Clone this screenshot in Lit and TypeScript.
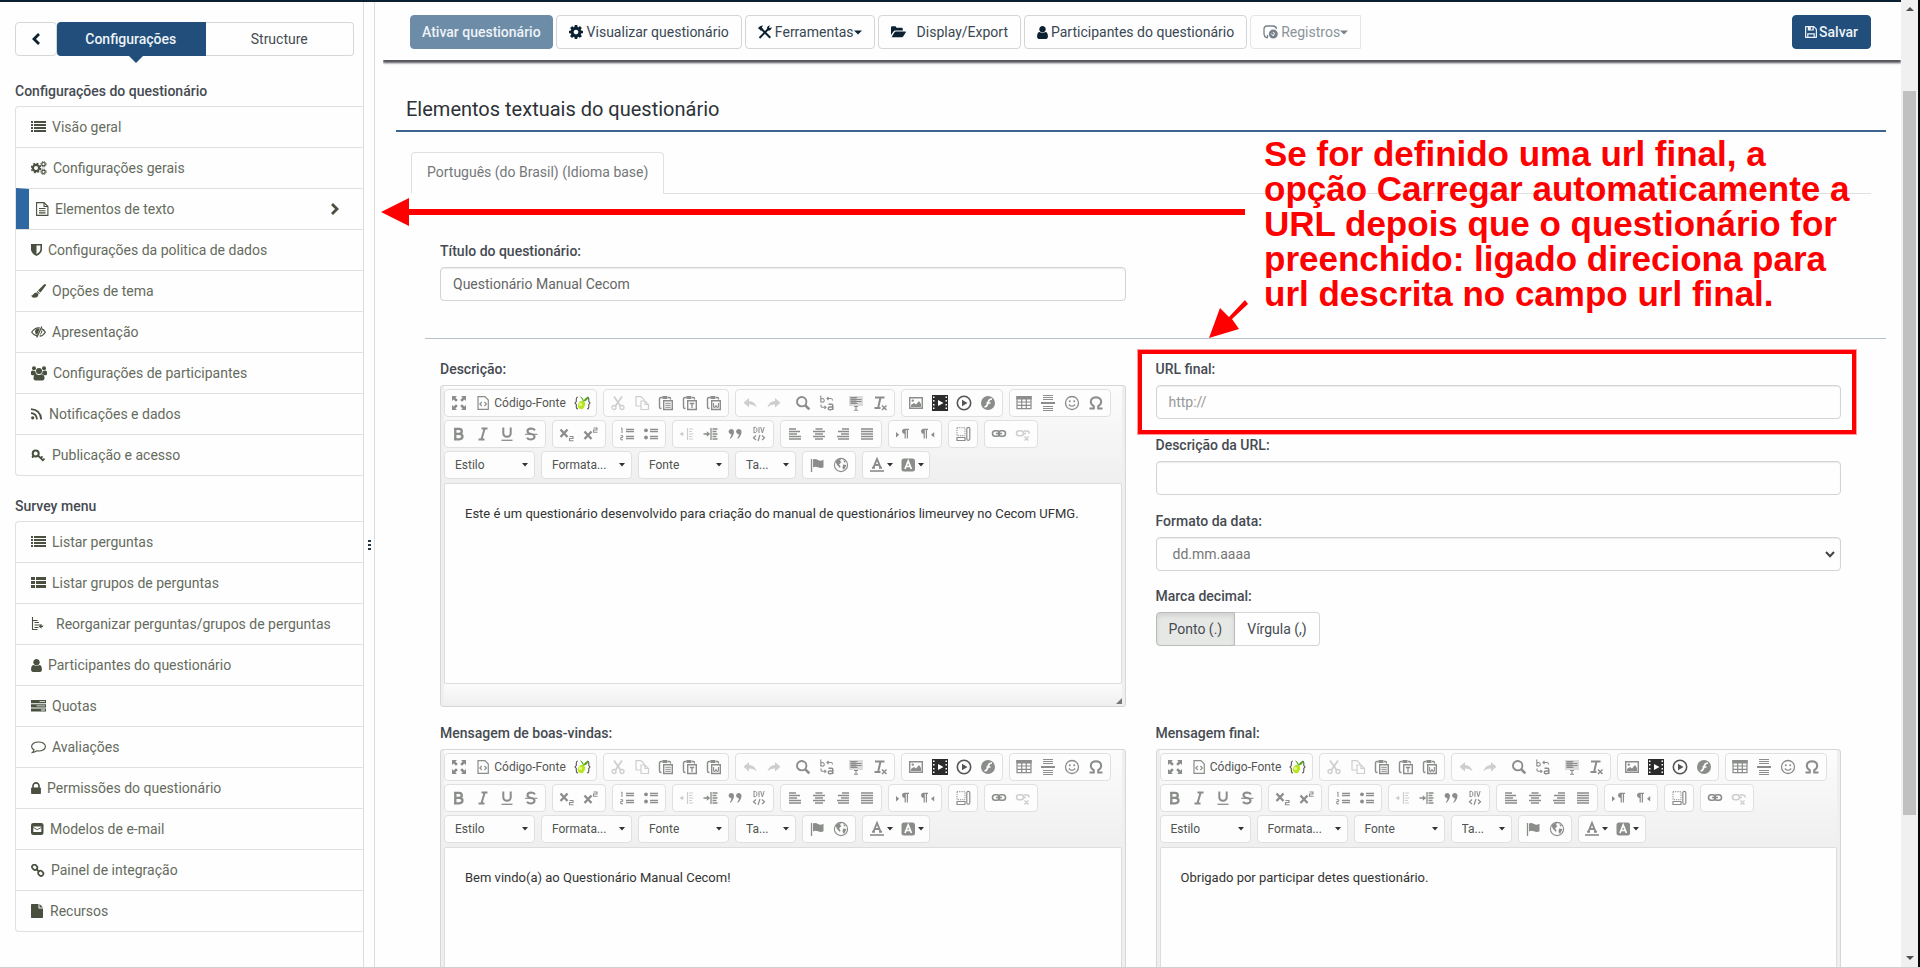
import { LitElement, html, svg, css, nothing, TemplateResult } from "lit";
import { customElement, property } from "lit/decorators.js";
import { classMap } from "lit/directives/class-map.js";

type Icon = { w: number; h: number; box: string; art: TemplateResult };
const ic = (w: number, h: number, art: TemplateResult, box = `0 0 ${w} ${h}`): Icon => ({ w, h, art, box });

const userPath = svg`<path d="M1536 1399q0 109-62.5 187t-150.5 78h-854q-88 0-150.5-78t-62.5-187q0-85 8.5-160.5t31.5-152 58.5-131 94-89 134.5-34.5q131 128 313 128t313-128q76 0 134.5 34.5t94 89 58.5 131 31.5 152 8.5 160.5zm-256-887q0 159-112.5 271.5t-271.5 112.5-271.5-112.5-112.5-271.5 112.5-271.5 271.5-112.5 271.5 112.5 112.5 271.5z"/>`;
const cogPath = svg`<path d="M1152 896q0-106-75-181t-181-75-181 75-75 181 75 181 181 75 181-75 75-181zm512-109v222q0 12-8 23t-20 13l-185 28q-19 54-39 91 35 50 107 138 10 12 10 25t-9 23q-27 37-99 108t-94 71q-12 0-26-9l-138-108q-44 23-91 38-16 136-29 186-7 28-36 28h-222q-14 0-24.5-8.5t-11.5-21.5l-28-184q-49-16-90-37l-141 107q-10 9-25 9-14 0-25-11-126-114-165-168-7-10-7-23 0-12 8-23 15-21 51-66.5t54-70.5q-27-50-41-99l-183-27q-13-2-21-12.5t-8-23.5v-222q0-12 8-23t19-13l186-28q14-46 39-92-40-57-107-138-10-12-10-24 0-10 9-23 26-36 98.5-107.5t94.5-71.5q13 0 26 10l138 107q44-23 91-38 16-136 29-186 7-28 36-28h222q14 0 24.5 8.5t11.5 21.5l28 184q49 16 90 37l142-107q9-9 24-9 13 0 25 10 129 119 165 170 7 8 7 22 0 12-8 23-15 21-51 66.5t-54 70.5q26 50 41 98l183 28q13 2 21 12.5t8 23.5z"/>`;
const clip = svg`<path d="M4.500 2.500H3Q1.500 2.500 1.500 4v8Q1.500 13.500 3 13.500h.5M10 2.500h1.500Q12.500 2.500 12.500 4v.5" fill="none" stroke="currentColor" stroke-width="1.400"/><path d="M4.500 1h5v3h-5z"/><path d="M5.700 5.700h8.600v8.800H5.700z" fill="#fdfefd" stroke="currentColor" stroke-width="1.400"/>`;
const line = (d: string, w = 1.5) => svg`<path d=${d} fill="none" stroke="currentColor" stroke-width=${w}/>`;

const ICONS: Record<string, Icon> = {
  back: ic(8, 12, line("M7 1L2 6l5 5", 2.8)),
  next: ic(8, 12, line("M1 1l5 5-5 5", 2.8)),
  list: ic(15, 12, svg`<path d="M0 0h2v2H0zM3 0h12v2H3zM0 3h2v2H0zM3 3h12v2H3zM0 6h2v2H0zM3 6h12v2H3zM0 9h2v2H0zM3 9h12v2H3z"/>`),
  thlist: ic(15, 12, svg`<path d="M0 0h4v3H0zM5 0h10v3H5zM0 4h4v3H0zM5 4h10v3H5zM0 8h4v3H0zM5 8h10v3H5z"/>`),
  cog: ic(14, 14, cogPath, "128 128 1536 1536"),
  cogs: ic(16, 14, svg`<circle cx="5" cy="7" r="3.100" fill="none" stroke="currentColor" stroke-width="2.200"/><circle cx="5" cy="7" r="4.700" fill="none" stroke="currentColor" stroke-width="1.300" stroke-dasharray="2 1.690"/><circle cx="12.500" cy="3.200" r="1.700" fill="none" stroke="currentColor" stroke-width="1.200"/><circle cx="12.500" cy="3.200" r="2.700" fill="none" stroke="currentColor" stroke-dasharray="1.200 .92"/><circle cx="12.500" cy="10.800" r="1.700" fill="none" stroke="currentColor" stroke-width="1.200"/><circle cx="12.500" cy="10.800" r="2.700" fill="none" stroke="currentColor" stroke-dasharray="1.200 .92"/>`),
  filetext: ic(13, 14, svg`${line("M.6.600h7.400l3.900 3.900v8.900H.6zM8 .6v3.900h3.900", 1.1)}${line("M3 6.500h6.500M3 8.700h6.500M3 10.900h6.500", 1.1)}`),
  shield: ic(11, 12, svg`<path d="M0 0h11v6Q10 10 5.500 12 1 10 0 6zM5.500 1.600v8.700Q9 8.500 9.400 5.800V1.600z" fill-rule="evenodd"/>`),
  brush: ic(15, 14, svg`<path d="M14.600.2q.7.600.1 1.500L9.500 8.600 7 6.500 12.900.6q.9-.8 1.700-.4zM6.400 7.100l2.500 2.200-.6.800-2.600-2.200zM5.200 8.400q2.300.8 2.200 2.600-.6 2.800-4 2.800-2.600 0-3.400-2.600 1.200.6 1.900-.4 1.200-2.300 3.300-2.400z"/>`),
  eyeslash: ic(15, 12, svg`${line("M6.500 10.200Q2.800 9.500.7 6.200 3.500 1.800 7.500 1.800l1.300.1M10.500 2.600q2.500 1.200 3.800 3.600-2.200 3.700-5.600 4", 1.2)}<path d="M4 5.600Q4.300 2.800 7.500 2.600l1.200.2-2.500 6Q4 8 4 5.600z"/>${line("M10.800.6L5.800 11.400", 1.2)}${line("M10.800 4.500q.3 3-2 4", 1)}`),
  users: ic(16, 15, svg`<circle cx="3" cy="2.300" r="2"/><circle cx="13" cy="2.300" r="2"/><circle cx="8" cy="5" r="3"/><path d="M0 8.600V6Q.3 4.500 1.400 4.500L4.200 5q.2 2 1.300 3.100-1 .5-1.300 1.100H1zM16 8.600V6q-.3-1.500-1.400-1.500L11.800 5q-.2 2-1.300 3.100 1 .5 1.300 1.100H15zM2.500 12.500Q2.500 8.500 5 8q3 2 6 0 2.500.5 2.500 4.500-.2 2-2 2h-7q-1.800 0-2-2z"/>`),
  rss: ic(12, 12, svg`<circle cx="1.700" cy="9.800" r="1.600"/>${line("M0 5.200q5.600.4 6 6.200M0 1.200q9.600.6 10.200 10.200", 1.8)}`),
  key: ic(15, 13, svg`<circle cx="4.700" cy="4.500" r="3" fill="none" stroke="currentColor" stroke-width="2"/>${line("M3 6.800L1 8.500M6.800 6.300l5.700 5.600M9.700 9l1.800-1.600M11.800 11.200l1.700-1.600", 1.8)}`),
  reorg: ic(19, 14, svg`${line("M1.500 0v13M1.500 3.500h5M1.500 12.500h5M3.500 5.500h4.500M3.500 8h7M3.500 10.500h4", 1.1)}<path d="M13 4.500v4.200h-2.500v-1.700L7.800 9.400l2.700 2.300V10H12V9l1-1z"/>`),
  user: ic(11, 13, userPath, "256 128 1280 1536"),
  quotas: ic(15, 12, svg`<path d="M0 0h15v3.200H0zM0 4.200h15v3.200H0zM0 8.400h15v3.200H0z"/><path d="M8.500 1.200H14v.9H8.500zM5.500 5.400H14v.9H5.500zM10 9.600h4v.9h-4z" fill="#fdfefd"/>`),
  comment: ic(15, 13, line("M7.500 1C3.500 1 .6 3 .6 5.500q0 2 2.400 3.300-.3 1.700-1.500 2.700 2.300-.2 4-1.700l2 .2c4 0 6.900-2 6.900-4.500S11.500 1 7.500 1z", 1.1)),
  lock: ic(10, 12, svg`<path d="M640 768h512v-192q0-106-75-181t-181-75-181 75-75 181v192zm832 96v576q0 40-28 68t-68 28h-960q-40 0-68-28t-28-68v-576q0-40 28-68t68-28h32v-192q0-184 132-316t316-132 316 132 132 316v192h32q40 0 68 28t28 68z"/>`, "320 128 1152 1408"),
  mail: ic(13, 12, svg`<rect width="12.500" height="12" rx="2.300"/><path d="M2.300 3.500h8v5.500h-8z" fill="#fdfefd"/>${line("M2.300 4.500l4 2.200 4-2.200", .9)}`),
  chain: ic(14, 13, svg`<rect x="1" y="1" width="5.500" height="4.500" rx="2.100" transform="rotate(45 3.700 3.200)" fill="none" stroke="currentColor" stroke-width="1.700"/><rect x="7" y="7" width="5.500" height="4.500" rx="2.100" transform="rotate(45 9.700 9.200)" fill="none" stroke="currentColor" stroke-width="1.700"/>${line("M5 4.600l3.500 3.500", 1.7)}`),
  file: ic(13, 14, svg`<path d="M0 .7Q0 0 .7 0H7.500v4.500H12v8.800q0 .7-.7.700H.7Q0 14 0 13.300zM8.500 0L12 3.500H8.500z"/>`),
  tools: ic(14, 14, svg`${line("M3 3.500l9.300 9.300M11 3.200L1.500 13", 2)}<path d="M0 3.500Q1.500.500 5 .4L3.800 2.500 5 4 3 6 1.800 4.500zM9 2.500Q10 .200 12.300.5L10.800 2l1.200 1.300L13.500 2q.5 2.500-1.800 3.400H9.600z"/>`),
  folder: ic(15, 12, svg`<path d="M0 9V1.300Q.1.300 1.200.2h3q1 .1 1.100 1.200v.4h5.300q1.100.1 1.200 1.200v1.400H4.200q-1 .1-1.700 1zM.6 11.300L3.300 6.500q.5-.9 1.500-1h9.400q1.100.1.500 1.100l-2.400 3.700q-.6 1-1.700 1z"/>`),
  log: ic(15, 14, svg`${line("M5 12.600H3.500Q1 11.500 1 9V4Q1.200 1 4 1h6q3.300.2 3.500 3", 1.3)}${line("M4.500 12.500V10", 1.3)}<circle cx="10.300" cy="9" r="4.500"/><path d="M8 8.500l2.300 2.500 1.200-2.700-1.700-1" stroke="#fdfefd" fill="none"/>`),
  save: ic(12, 12, svg`<path d="M0 .7Q0 0 .7 0H9l3 3v8.300q0 .7-.7.700H.7Q0 12 0 11.300zM1.200 1.200v9.600h1V7.300h7.600v3.500h1V3.500L8.800 1.200v3.300H2.800V1.200zM5.800 1.200v2.200h1.700V1.200zM3.400 8.500v2.300h5.200V8.500z" fill-rule="evenodd"/>`),

  max: ic(16, 16, svg`<path d="M1 1h5L4.400 2.600l2.400 2.400-1.800 1.800L2.600 4.400 1 6zM15 1v5l-1.600-1.600L11 6.800 9.200 5l2.400-2.400L10 1zM1 15v-5l1.600 1.600L5 9.200 6.800 11l-2.400 2.400L6 15zM15 15h-5l1.600-1.600L9.200 11 11 9.200l2.400 2.400L15 10z"/>`),
  source: ic(16, 16, svg`${line("M3 1.700h7l3.300 3.300v9.300H3z", 1.2)}${line("M6.800 7L4.800 9l2 2M9.400 7l2 2-2 2", 1.1)}`),
  lime: ic(17, 16, svg`<path d="M4 2Q2.300 2 2.300 4v2.500L1 8l1.300 1.500V12q0 2 1.700 2M13.500 2q1.300 0 1.300 2v2.500L16 8l-1.200 1.500V12q0 2-1.800 2" fill="none" stroke="#555" stroke-width="1.100"/><ellipse cx="7.500" cy="10" rx="3.400" ry="4.200" transform="rotate(25 7.500 10)" fill="#b6e61e"/><circle cx="6.500" cy="9.500" r="1.700" fill="#e3f77a"/><path d="M9.500 6.500Q9 3 6.500 1.800M10 6q1-3 4-3.800Q13 6 10 6z" fill="#58a618" stroke="#58a618"/>`),
  cut: ic(16, 16, svg`${line("M4 1.500l6.500 9.500M12 1.500L5.500 11", 1.7)}<circle cx="4" cy="12.500" r="2" fill="none" stroke="currentColor" stroke-width="1.300"/><circle cx="12" cy="12.500" r="2" fill="none" stroke="currentColor" stroke-width="1.300"/>`),
  copy: ic(16, 16, svg`${line("M7 11H2V1.600h5l3 3V6", 1.2)}${line("M7 6h4l3.500 3.500v5H7zM11 6v3.500h3.500", 1.2)}`),
  paste: ic(16, 16, svg`${clip}${line("M7.300 8.300h5.500M7.300 10.300h5.500M7.300 12.300h5.500", 1)}`),
  pastet: ic(16, 16, svg`${clip}${line("M7.800 8.500h4.400M10 8.500v4.500", 1.3)}`),
  pastew: ic(16, 16, svg`${clip}${line("M7.600 8v4l1.200.5 1.200-2 1.200 2 1.200-.5V8", 1.1)}`),
  undo: ic(16, 16, svg`<path d="M7 3v3q6 .2 7.500 6.500Q12 9.500 7 9.600V12.500L1.500 7.700z"/>`),
  redo: ic(16, 16, svg`<path d="M9 3v3q-6 .2-7.500 6.500Q4 9.500 9 9.600V12.500l5.500-4.800z"/>`),
  find: ic(16, 16, svg`<circle cx="6.700" cy="6.700" r="4.700" fill="none" stroke="currentColor" stroke-width="1.900"/>${line("M10.300 10.300l4 4", 2.6)}`),
  replace: ic(16, 16, svg`${line("M1.800.5v7M1.800 5Q2 3.500 3.500 3.500T5.200 5.300 3.500 7.100 1.800 5.500M8 3.500h4q1.500 0 1.500 2M9.500 2L8 3.500 9.500 5M2 9.500v1.500q0 1.300 1.500 1.300H7M5.500 10.800L7 12.300l-1.500 1.500", 1.1)}${line("M9.500 9.300h3q1.300 0 1.300 1.500v4.200M13.800 12h-3q-1.500 0-1.500 1.400t1.500 1.400 3-1", 1.5)}`),
  selall: ic(16, 16, svg`<path d="M1 1h14v10H1z" opacity=".3"/>${line("M2.500 2.500h7M2.500 4.500h11M2.500 6.500h11M2.500 8.500h7", 1.2)}<path d="M2.500 2h6v6h-6z" opacity=".6"/>${line("M6 11.500h4M8 11.500v4M6 15.300h4", 1.1)}`),
  removef: ic(16, 16, svg`${line("M3 2.500h9.500M8.500 2.500L6.300 12M2.500 13h6", 2)}${line("M10 10.500l4.500 4.500M14.500 10.500L10 15", 1.5)}`),
  image: ic(16, 16, svg`${line("M1.700 2.700h12.600v10.600H1.700z", 1.400)}<circle cx="4.800" cy="5.600" r="1.200"/><path d="M3 12V10l3-2 2 1.500L11 6l2 3v3z"/>`),
  film: ic(16, 16, svg`<path d="M0 0h16v16H0z" fill="#2b2b2b"/><path d="M1 1.500h1.500V3H1zM1 5h1.500v1.500H1zM1 9h1.500v1.500H1zM1 12.500h1.500V14H1zM13.500 1.500H15V3h-1.500zM13.500 5H15v1.500h-1.500zM13.500 9H15v1.500h-1.500zM13.500 12.500H15V14h-1.500zM6 5l5.500 3L6 11z" fill="#fff"/>`),
  play: ic(16, 16, svg`<circle cx="8" cy="8" r="6.700" fill="none" stroke="#555" stroke-width="1.600"/><path d="M6 4.800L11.500 8 6 11.200z" fill="#555"/>`),
  flash: ic(16, 16, svg`<circle cx="8" cy="8" r="7"/><path d="M12 4Q9 4 8.300 6.800L7.700 9Q7 11.500 4.500 12M6.500 8h4" stroke="#fff" stroke-width="1.700" fill="none"/>`),
  table: ic(16, 16, svg`${line("M1 1.700h14v12H1zM1 7h14M1 10.300h14M5.700 4v10M10.300 4v10", 1.2)}<path d="M.4 1h15.200v3.500H.4z"/>`),
  pagebr: ic(16, 16, svg`${line("M3 .5h10M3 2.500h10M3 4.500h10M3 11.500h10M3 13.500h10M3 15.500h10", 1)}${line("M1 8h14", 2)}`),
  smile: ic(16, 16, svg`<circle cx="8" cy="8" r="6.500" fill="none" stroke="currentColor" stroke-width="1.300"/><circle cx="5.800" cy="6.300" r="1"/><circle cx="10.200" cy="6.300" r="1"/>${line("M4.800 9.500Q8 13 11.200 9.500", 1.200)}`),
  omega: ic(16, 16, line("M1.500 13.500h4.300v-2.300Q2.800 9.500 2.800 6.800 3 2.300 8 2.200q5 .1 5.200 4.600 0 2.700-3 4.400v2.300h4.300", 2)),
  bold: ic(16, 16, line("M4.300 2.800v10.500M3 2.800h5.200q2.600.2 2.600 2.500T8.200 7.900H4.300M8.200 7.900q3.300.2 3.300 2.700t-3.300 2.700H3", 2.3)),
  italic: ic(16, 16, line("M6.500 2.500h6M3.500 13.500h6M9.700 2.500l-3.300 11", 2)),
  under: ic(16, 16, svg`${line("M4.300 1.500V7.500q.2 3.200 3.700 3.200t3.700-3.200V1.500", 2)}${line("M2.500 14.300h11", 1.3)}`),
  strike: ic(16, 16, svg`${line("M12 4.200Q10.500 2.500 8 2.500q-3.500.1-3.500 2.600T8 8t3.500 2.800-3.500 2.700q-3 0-4-1.800", 2.1)}${line("M2 8.300h12.500", 1.1)}`),
  sub: ic(16, 16, svg`${line("M1.500 3.500l7 7.500M8.500 3.500l-7 7.500", 2.300)}${line("M10.500 10.500h3.500v2h-3.500v2.300h4", 1.1)}`),
  sup: ic(16, 16, svg`${line("M1.500 5.500l7 7.500M8.500 5.500l-7 7.500", 2.300)}${line("M10.500 2h3.500v2h-3.500v2.300h4", 1.1)}`),
  ol: ic(16, 16, svg`${line("M2 2.500l1-.5v5M1.500 9.700h2.200v1.800H1.800v2.300H4", 1)}${line("M7 3.500h8M7 5.700h8M7 10.500h8M7 12.700h8", 1.300)}`),
  ul: ic(16, 16, svg`<circle cx="3" cy="4.300" r="1.900"/><circle cx="3" cy="11.500" r="1.900"/>${line("M7 3.500h8M7 5.700h8M7 10.500h8M7 12.700h8", 1.300)}`),
  outdent: ic(16, 16, svg`${line("M1 8h4M8.500 2v12M10 3h4M10 5.500h3M10 8h4.500M10 10.500h3M10 13h4", 1.2)}<path d="M4 5.500L1 8l3 2.500z"/>`),
  indent: ic(16, 16, svg`${line("M.500 8h4M8 2v12M9.500 3h5M9.500 5.500h4M9.500 8h5M9.500 10.500h4M9.500 13h5", 1.3)}<path d="M3.800 5.300L7.200 8 3.800 10.700z"/>`),
  quote: ic(16, 16, svg`<path d="M1.500 5.500Q1.700 3 4.200 3 7 3.200 7 6.200 6.500 11 2.500 13 4.600 10 4.400 8.200 1.700 8 1.500 5.500zM9 5.500Q9.200 3 11.700 3q2.800.2 2.800 3.200Q14 11 10 13q2.100-3 1.900-4.800Q9.200 8 9 5.500z"/>`),
  div: ic(16, 16, svg`${line("M3 1v6M3 1.400h1.500q1.500.5 1.500 2.600T4.500 6.600H3M8 1v6M9.700 1l1.700 6 1.700-6", 1)}${line("M5 9.500L2.500 11.800 5 14M11 9.500l2.500 2.300L11 14M9 9l-2 6", 1.2)}`),
  left: ic(16, 16, line("M2 3h7M2 5.500h11M2 8h8M2 10.500h12M2 13h12", 1.7)),
  center: ic(16, 16, line("M4.500 3h7M2 5.500h12M4 8h8M2 10.500h12M4 13h8", 1.7)),
  right: ic(16, 16, line("M7 3h7M3 5.500h11M6 8h8M2 10.500h12M3 13h11", 1.7)),
  just: ic(16, 16, line("M2 3h12M2 5.500h12M2 8h12M2 10.500h12M2 13h12", 1.7)),
  ltr: ic(16, 16, svg`<path d="M1 6l3.200 2.700L1 11.400zM7 5.500Q7.200 2.800 9.500 2.800H14V4h-1v8.500h-1.200V4h-1v8.500H9.600V8Q7.200 7.800 7 5.500z"/>`),
  rtl: ic(16, 16, svg`<path d="M15.200 6L12 8.700l3.200 2.700zM2 5.500Q2.200 2.800 4.500 2.800H9V4H8v8.500H6.800V4h-1v8.500H4.600V8Q2.200 7.800 2 5.500z"/>`),
  bidi: ic(16, 16, svg`<path d="M2 1.700h8v8H2z" fill="none" stroke="currentColor" stroke-dasharray="1.200 1"/>${line("M2 11.500h8v3H2z", 1.2)}<rect x="11.800" y="1.300" width="3" height="13" rx="1.500" fill="none" stroke="currentColor" stroke-width="1.200"/>`),
  link: ic(16, 16, svg`<rect x="1.500" y="4.800" width="7" height="5.500" rx="2.700" fill="none" stroke="currentColor" stroke-width="1.600"/><rect x="7.500" y="4.800" width="7" height="5.500" rx="2.700" fill="none" stroke="currentColor" stroke-width="1.600"/>${line("M5 7.500h6", 1.5)}`),
  unlink: ic(16, 16, svg`<rect x="1.500" y="4.800" width="7" height="5" rx="2.500" fill="none" stroke="currentColor" stroke-width="1.600"/>${line("M9 5h3q2.200.3 2.200 2.500M8 7.500h3M9.500 10.500l4 4M13.500 10.500l-4 4", 1.500)}`),
  flag: ic(16, 16, svg`${line("M2.500 2v13", 1.300)}<path d="M4 2.500Q6.500 1.500 9 3t5.500-.3v7.500Q12 11.500 9 10.300T4 10.500z"/>`),
  globe: ic(16, 16, svg`<circle cx="8" cy="8" r="6.600" fill="none" stroke="currentColor" stroke-width="1.100"/><path d="M2.500 4.500Q5 1.500 8 2l-1 2 1.500 1-2.500 2.500L7.500 9 7 11 4 8zM10 7.500l3.500.5-2.500 5-1.500-2zM10.500 2.500l2.500 2.500-2 .5z"/>`),
  fcolor: ic(16, 16, svg`${line("M4.500 10.500L8 2l3.500 8.500M5.500 8h5M3 10.800h3M10 10.800h3", 1.900)}${line("M1 14h14", 1.600)}`),
  bcolor: ic(16, 16, svg`<rect x="1.500" y="1.500" width="13.500" height="13" rx="2.500"/><path d="M5 12L8.200 4l3.200 8M6 9.500h4.500" stroke="#fff" stroke-width="1.700" fill="none"/>`),
  caret: ic(6, 4, svg`<path d="M0 0h6L3 3.500z"/>`),
  btncaret: ic(8, 5, svg`<path d="M0 .500h8L4 4.500z"/>`),
  chevdown: ic(10, 7, line("M1 1l4 4.200L9 1", 2)),
};

const icon = (name: string) => {
  const i = ICONS[name];
  return html`<svg class="i" width=${i.w} height=${i.h} viewBox=${i.box} fill="currentColor" aria-hidden="true">${i.art}</svg>`;
};

const iconCss = css`.i { display: block; flex: none; }`;

type Tool = { n: string; label: string; off?: boolean; drop?: boolean };
const t = (n: string, label: string, off = false, drop = false): Tool => ({ n, label, off, drop });

const ROW1: (Tool | "sep")[][] = [
  [t("cut", "Cortar", true), t("copy", "Copiar", true), t("paste", "Colar"), t("pastet", "Colar como texto"), t("pastew", "Colar do Word")],
  [t("undo", "Desfazer", true), t("redo", "Refazer", true), "sep", t("find", "Localizar"), t("replace", "Substituir"), "sep", t("selall", "Selecionar tudo"), t("removef", "Remover formatação")],
  [t("image", "Imagem"), t("film", "Vídeo"), t("play", "Reproduzir"), t("flash", "Flash")],
  [t("table", "Tabela"), t("pagebr", "Quebra de página"), t("smile", "Emoticon"), t("omega", "Caractere especial")],
];
const ROW2: (Tool | "sep")[][] = [
  [t("bold", "Negrito"), t("italic", "Itálico"), t("under", "Sublinhado"), t("strike", "Tachado")],
  [t("sub", "Subscrito"), t("sup", "Sobrescrito")],
  [t("ol", "Lista numerada"), t("ul", "Lista")],
  [t("outdent", "Diminuir recuo", true), t("indent", "Aumentar recuo"), t("quote", "Citação"), t("div", "Criar DIV")],
  [t("left", "Esquerda"), t("center", "Centralizar"), t("right", "Direita"), t("just", "Justificado")],
  [t("ltr", "Esquerda para direita"), t("rtl", "Direita para esquerda")],
  [t("bidi", "Mostrar blocos")],
  [t("link", "Link"), t("unlink", "Remover link", true)],
];
const ROW3: Tool[][] = [
  [t("flag", "Âncora"), t("globe", "Iframe")],
  [t("fcolor", "Cor do texto", false, true), t("bcolor", "Cor do fundo", false, true)],
];

@customElement("rich-editor")
export class RichEditor extends LitElement {
  @property() label = "";
  @property() text = "";

  static styles = [iconCss, css`
    :host { display: block; min-width: 0; }
    label { display: block; height: 20px; line-height: 20px; margin-bottom: 6px; font-weight: 500; color: #464a52; }
    .frame { border: 1px solid #d6d8d6; border-radius: 3px; background: #efefef; padding: 0 3px; }
    .bars { display: flex; flex-direction: column; gap: 3px; padding: 3px 0 4px; background: linear-gradient(#fbfcfb, #eeefee); }
    .bar { display: flex; gap: 6px; color: #8a8d8a; }
    .grp { display: flex; align-items: center; height: 28px; box-sizing: border-box; border: 1px solid #dfe0df; border-radius: 4px; padding: 0 2px; background: #fcfdfc; }
    button { display: flex; align-items: center; justify-content: center; width: 24px; height: 26px; padding: 0; border: 0; background: none; color: inherit; font: inherit; }
    button:disabled { color: #cdcfcd; }
    .src { width: 99px; gap: 3px; font-size: 12px; }
    .src span { color: #555; }
    .drop { width: 31px; gap: 2px; }
    .drop .i:last-child { color: #333; }
    .sep { width: 5px; }
    .combo { display: grid; align-items: center; width: 91px; height: 28px; box-sizing: border-box; border: 1px solid #dfe0df; border-radius: 4px; background: #fcfdfc; color: #333; }
    .combo.small { width: 61px; }
    .combo > * { grid-area: 1 / 1; }
    .combo .i { justify-self: end; margin-right: 6px; pointer-events: none; }
    select { appearance: none; border: 0; background: none; width: 100%; height: 26px; padding: 0 10px; font: 12px Roboto, sans-serif; color: #505350; }
    textarea { display: block; box-sizing: border-box; width: 100%; height: 201px; resize: none; border: 1px solid #dcdedc; border-radius: 2px; padding: 20px; background: #fdfefd; font: 13px/20px Roboto, sans-serif; color: #333; outline: 0; overflow: hidden; }
    .foot { box-sizing: border-box; height: 22px; display: flex; align-items: flex-end; justify-content: flex-end; background: linear-gradient(#fafbfa, #eeefee); color: #777; padding-bottom: 2px; }
  `];

  private tool(x: Tool | "sep") {
    if (x === "sep") return html`<span class="sep"></span>`;
    return html`<button type="button" class=${classMap({ drop: !!x.drop })} aria-label=${x.label} ?disabled=${x.off}>${icon(x.n)}${x.drop ? icon("caret") : nothing}</button>`;
  }
  private group(g: (Tool | "sep")[]) { return html`<div class="grp">${g.map((x) => this.tool(x))}</div>`; }
  private combo(name: string, small = false) {
    return html`<div class=${classMap({ combo: true, small })}><select aria-label=${name}><option>${name}</option></select>${icon("caret")}</div>`;
  }

  render() {
    return html`
      <label for="body">${this.label}</label>
      <div class="frame">
        <div class="bars">
          <div class="bar">
            <div class="grp">
              <button type="button" aria-label="Maximizar">${icon("max")}</button>
              <button type="button" class="src">${icon("source")}<span>Código-Fonte</span></button>
              <button type="button" aria-label="Campos substitutos">${icon("lime")}</button>
            </div>
            ${ROW1.map((g) => this.group(g))}
          </div>
          <div class="bar">${ROW2.map((g) => this.group(g))}</div>
          <div class="bar">
            ${this.combo("Estilo")}${this.combo("Formata...")}${this.combo("Fonte")}${this.combo("Ta...", true)}
            ${ROW3.map((g) => this.group(g))}
          </div>
        </div>
        <textarea id="body" .value=${this.text}></textarea>
        <div class="foot"><svg class="i" width="6" height="6" fill="currentColor" aria-hidden="true"><path d="M6 0v6H0z"/></svg></div>
      </div>`;
  }
}

const MENU1 = [
  ["list", "Visão geral"], ["cogs", "Configurações gerais"], ["filetext", "Elementos de texto"], ["shield", "Configurações da politica de dados"],
  ["brush", "Opções de tema"], ["eyeslash", "Apresentação"], ["users", "Configurações de participantes"], ["rss", "Notificações e dados"], ["key", "Publicação e acesso"],
];
const MENU2 = [
  ["list", "Listar perguntas"], ["thlist", "Listar grupos de perguntas"], ["reorg", "Reorganizar perguntas/grupos de perguntas"], ["user", "Participantes do questionário"],
  ["quotas", "Quotas"], ["comment", "Avaliações"], ["lock", "Permissões do questionário"], ["mail", "Modelos de e-mail"], ["chain", "Painel de integração"], ["file", "Recursos"],
];

@customElement("app-root")
export class AppRoot extends LitElement {
  static styles = [iconCss, css`
    :host { display: block; position: relative; height: 100vh; overflow: hidden; font: 14px/20px Roboto, sans-serif; color: #464a52; background: #fdfefd; }
    .page { display: grid; grid-template-columns: 363px 12px 1fr 17px 2px; height: 100%; box-sizing: border-box; border-bottom: 1px solid #cfd0cf; }
    .topline { position: absolute; inset: 0 19px auto 0; height: 2px; background: #0b2030; }
    button { font: inherit; color: inherit; background: none; padding: 0; border: 0; }

    aside { padding: 22px 0 0 15px; }
    .switch { display: flex; height: 34px; margin-right: 9px; }
    .switch button { box-sizing: border-box; border: 1px solid #d5d8d8; display: flex; align-items: center; justify-content: center; }
    .switch .collapse { width: 42px; border-radius: 4px; color: #0b2030; }
    .switch .tab { flex: 1; border-radius: 0 4px 4px 0; border-left: 0; }
    .switch .tab.on { position: relative; background: #214e7a; border-color: #214e7a; border-radius: 4px 0 0 4px; color: #eef3f7; font-weight: 500; }
    .tab.on::after { content: ""; position: absolute; top: 100%; left: 71px; border: 8px solid transparent; border-bottom: 0; border-top-color: #214e7a; }
    h2 { margin: 25px 0 5px; font-size: 14px; line-height: 20px; font-weight: 500; color: #464a52; }
    h2.second { margin-top: 20px; }
    nav { border: 1px solid #dfe1df; border-right: 0; border-radius: 4px 0 0 4px; }
    nav a { display: flex; align-items: center; gap: 6px; height: 40px; padding: 0 15px; color: #666b60; text-decoration: none; }
    nav a + a { border-top: 1px solid #dfe1df; }
    nav .i { color: #495040; }
    nav a.on { padding: 0 24px 0 7px; border-left: 13px solid #2d68a3; }
    nav a.on .i:last-child { margin-left: auto; }
    .split { border: 1px solid #dcdddc; border-width: 0 1px; display: flex; align-items: center; justify-content: center; padding-top: 122px; color: #223848; }

    main { overflow: hidden; min-width: 0; }
    .actions { display: flex; gap: 3px; margin-left: 8px; height: 60px; box-sizing: border-box; padding: 15px 30px 0 27px; box-shadow: 0 3px 2px #55535c; clip-path: inset(0 0 -8px 0); }
    .actions button { box-sizing: border-box; height: 34px; display: flex; align-items: center; gap: 4px; border: 1px solid #d3d6d6; border-radius: 4px; padding: 0 12px; color: #3a4753; white-space: nowrap; }
    .actions button .i { color: #0b2030; }
    .actions .go { background: #6d8ca8; border-color: #6d8ca8; color: #eef3f7; font-weight: 500; padding: 0 11px; }
    .actions .wide { gap: 11px; }
    .actions .drop, .actions .person { gap: 3px; }
    .actions .drop .i:last-child { margin: 0 0 0 -3px; }
    .actions .muted { color: #8b939a; border-color: #e4e6e6; border-radius: 4px 0 0 4px; }
    .actions .muted .i { color: #77808a; }
    .actions .save { margin-left: auto; background: #214e7a; border-color: #214e7a; color: #eef3f7; font-weight: 500; gap: 2px; }
    .actions .save .i { color: #eef3f7; }

    h1 { margin: 34px 15px 0 21px; padding: 0 10px 6px; font-size: 20px; line-height: 30px; font-weight: 400; color: #2e3238; border-bottom: 2px solid #3d6491; }
    .langs { display: flex; margin: 20px 30px 0 36px; border-bottom: 1px solid #dfe1df; }
    .langs button { height: 42px; margin-bottom: -1px; padding: 0 15px 2px; border: 1px solid #dfe1df; border-bottom-color: #fdfefd; border-radius: 4px 4px 0 0; background: #fdfefd; color: #76777a; }
    .form { display: grid; grid-template-columns: 1fr 1fr; column-gap: 30px; margin: 47px 60px 0 65px; }
    .line { grid-column: 1 / -1; height: 1px; background: #b5c2cb; margin: 37px -45px 20px -15px; }
    .fields { display: flex; flex-direction: column; }
    .cell { display: flex; flex-direction: column; }
    .fields .cell + .cell { margin-top: 16px; }
    label, .legend { display: block; line-height: 20px; margin-bottom: 6px; font-weight: 500; color: #464a52; }
    input[type="text"], .date { box-sizing: border-box; width: 100%; height: 34px; border: 1px solid #d3d5d3; border-radius: 4px; background: #fdfefd; padding: 0 12px; font: inherit; color: #666; box-shadow: inset 0 1px 1px #ececec; }
    input::placeholder { color: #999; }
    .date { display: grid; align-items: center; padding: 0; }
    .date > * { grid-area: 1 / 1; }
    .date .i { justify-self: end; margin-right: 5px; pointer-events: none; color: #444; }
    .date select { appearance: none; border: 0; background: none; width: 100%; height: 32px; padding: 0 16px; font: inherit; color: #777; }
    .marks { border: 0; margin: 15px 0 0; padding: 0; }
    .legend { padding: 0; }
    .radios { display: flex; }
    .radios label { position: relative; margin: 0; height: 34px; line-height: 32px; box-sizing: border-box; padding: 0 12px; border: 1px solid #d5d8d5; border-radius: 0 4px 4px 0; border-left: 0; font-weight: 400; }
    .radios label.on { background: #e6e8e6; border: 1px solid #b9bcb9; border-radius: 4px 0 0 4px; box-shadow: inset 0 3px 4px #d0d2d0; }
    .radios input { position: absolute; opacity: 0; margin: 0; }
    .gap { height: 16px; grid-column: 1 / -1; }

    .scroll { display: flex; flex-direction: column; align-items: center; background: #eff0ef; padding: 7px 0; color: #505050; }
    .thumb { width: 13px; margin: 80px 0 auto; height: 76%; background: #bfc0bf; }
    .edge { background: #050707; }

    .note { position: absolute; left: 1264px; top: 136px; width: 620px; margin: 0; font: bold 35px/35px "Liberation Sans", Arial, sans-serif; color: #f00; }
    .mark { position: absolute; left: 1137px; top: 349px; width: 710px; height: 76px; border: 5px solid #f00; outline: 1px solid #ff9a9a; outline-offset: -1px; }
    .arrows { position: absolute; left: 0; top: 0; pointer-events: none; }
  `];

  private menu(items: string[][], current = "") {
    return html`<nav>${items.map(([i, label]) => html`<a href="#" class=${classMap({ on: label === current })}>${icon(i)}<span>${label}</span>${label === current ? icon("next") : nothing}</a>`)}</nav>`;
  }

  render() {
    return html`
      <div class="page">
        <aside>
          <div class="switch">
            <button type="button" class="collapse" aria-label="Recolher">${icon("back")}</button>
            <button type="button" class="tab on">Configurações</button>
            <button type="button" class="tab">Structure</button>
          </div>
          <h2>Configurações do questionário</h2>
          ${this.menu(MENU1, "Elementos de texto")}
          <h2 class="second">Survey menu</h2>
          ${this.menu(MENU2)}
        </aside>
        <div class="split"><svg class="i" width="3" height="10" fill="currentColor" aria-hidden="true"><path d="M0 0h3v2H0zM0 4h3v2H0zM0 8h3v2H0z"/></svg></div>
        <main>
          <div class="actions">
            <button type="button" class="go">Ativar questionário</button>
            <button type="button">${icon("cog")}Visualizar questionário</button>
            <button type="button" class="drop">${icon("tools")}Ferramentas${icon("btncaret")}</button>
            <button type="button" class="wide">${icon("folder")}Display/Export</button>
            <button type="button" class="person">${icon("user")}Participantes do questionário</button>
            <button type="button" class="drop muted">${icon("log")}Registros${icon("btncaret")}</button>
            <button type="button" class="save">${icon("save")}Salvar</button>
          </div>
          <h1>Elementos textuais do questionário</h1>
          <div class="langs"><button type="button">Português (do Brasil) (Idioma base)</button></div>
          <div class="form">
            <div class="cell">
              <label for="title">Título do questionário:</label>
              <input id="title" type="text" .value=${"Questionário Manual Cecom"}>
            </div>
            <div class="line"></div>
            <rich-editor label="Descrição:" text="Este é um questionário desenvolvido para criação do manual de questionários limeurvey no Cecom UFMG."></rich-editor>
            <div class="fields">
              <div class="cell"><label for="url">URL final:</label><input id="url" type="text" placeholder="http://"></div>
              <div class="cell"><label for="urldesc">Descrição da URL:</label><input id="urldesc" type="text"></div>
              <div class="cell"><label for="date">Formato da data:</label>
                <div class="date"><select id="date"><option>dd.mm.aaaa</option></select>${icon("chevdown")}</div></div>
              <fieldset class="marks">
                <legend class="legend">Marca decimal:</legend>
                <div class="radios">
                  <label class="on"><input type="radio" name="mark" checked>Ponto (.)</label>
                  <label><input type="radio" name="mark">Vírgula (,)</label>
                </div>
              </fieldset>
            </div>
            <div class="gap"></div>
            <rich-editor label="Mensagem de boas-vindas:" text="Bem vindo(a) ao Questionário Manual Cecom!"></rich-editor>
            <rich-editor label="Mensagem final:" text="Obrigado por participar detes questionário."></rich-editor>
          </div>
        </main>
        <div class="scroll">
          <svg class="i" width="8" height="4" fill="currentColor" aria-hidden="true"><path d="M0 4l4-4 4 4z"/></svg>
          <div class="thumb"></div>
          <svg class="i" width="8" height="4" fill="currentColor" aria-hidden="true"><path d="M0 0l4 4 4-4z"/></svg>
        </div>
        <div class="edge"></div>
      </div>
      <div class="topline"></div>
      <p class="note">Se for definido uma url final, a<br>opção Carregar automaticamente a<br>URL depois que o questionário for<br>preenchido: ligado direciona para<br>url descrita no campo url final.</p>
      <div class="mark"></div>
      <svg class="arrows" width="1280" height="345" fill="#f00" aria-hidden="true">
        <path d="M381 212l28-14v11h836v6H409v11z"/>
        <path d="M1245 300l3 4-16 15 7 10-30 9 11-30 9 9z"/>
      </svg>`;
  }
}
